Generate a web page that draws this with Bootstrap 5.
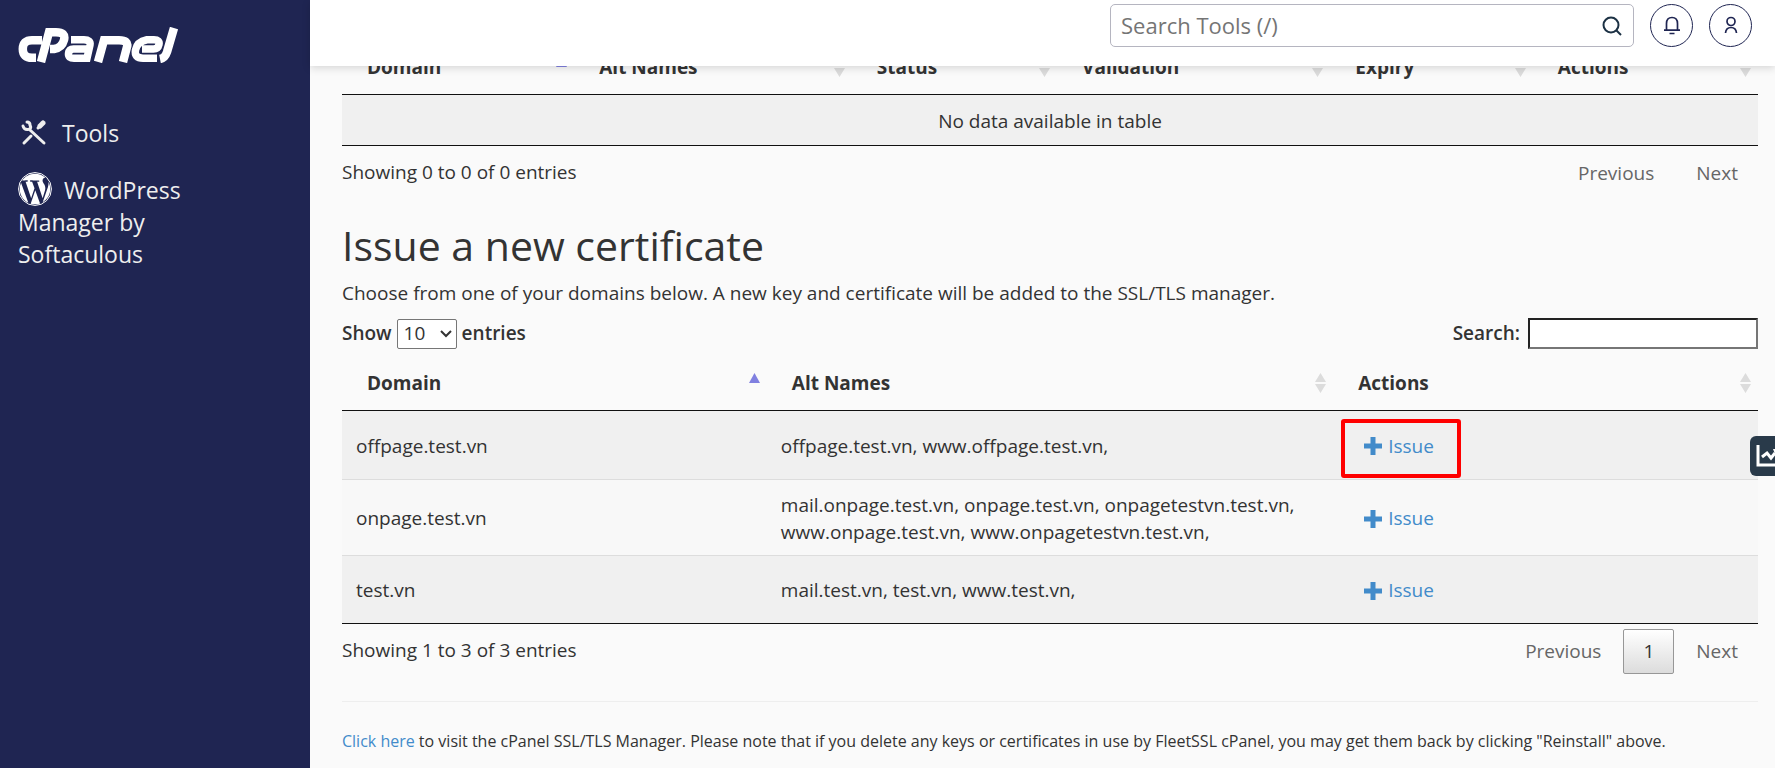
<!DOCTYPE html>
<html lang="en">
<head>
<meta charset="utf-8">
<meta name="viewport" content="width=device-width, initial-scale=1">
<title>cPanel - SSL certificates</title>
<link href="https://cdn.jsdelivr.net/npm/bootstrap@5.3.0/dist/css/bootstrap.min.css" rel="stylesheet">
<style>
  body { font-family: "Open Sans", "Noto Sans", sans-serif; font-size: 19px; line-height: 27px; color: #333; background: #fafafa; }
  a { color: #428bca; text-decoration: none; }

  .side-panel { width: 310px; background: #1f2552; padding: 27px 18px; }
  .side-panel a { color: #eee; font-size: 23px; line-height: 32px; }
  .brand-link { margin-bottom: 54px; }
  .wp-link { max-width: 190px; margin-top: 25px; }
  .wp-link svg { margin: -8px 12px 0 0; }

  .top-bar { height: 66px; background: #fff; padding: 4px 23px 0 0; gap: 16px; box-shadow: 0 2px 8px rgba(0,0,0,.15); z-index: 2; }
  .tool-search { width: 524px; height: 43px; border: 1px solid #b5b5c0; border-radius: 5px; background: #fff; }
  .tool-search input { border: 0; outline: 0; font-size: 22px; padding: 0 10px; min-width: 0; }
  .tool-search input::placeholder { color: #757575; opacity: 1; }
  .tool-search button { border: 0; background: none; padding: 0 11px; }
  .round-btn { width: 43px; height: 43px; border: 1px solid #1f2552; border-radius: 50%; background: #fff; padding: 0; }

  .page-body { margin-top: -26px; padding: 0 17px 0 32px; }
  .data-grid { width: 100%; table-layout: fixed; border-collapse: separate; border-spacing: 0; border-bottom: 1px solid #111; }
  .data-grid th { position: relative; height: 55px; padding: 0 25px; border-bottom: 1px solid #111; font-weight: 700; }
  .data-grid td { height: 68px; padding: 9px 14px 7px; background: #f0f0f0; }
  .data-grid tbody tr + tr td { border-top: 1px solid #ddd; }
  .data-grid tbody tr:nth-child(even) td { background: #f8f8f8; height: 76px; }
  .data-grid td.empty-cell { height: 50px; }
  .sorter { position: absolute; right: 7px; top: 17px; }
  .w-a { width: 16.4%; } .w-b { width: 19.6%; } .w-c { width: 14.5%; } .w-d { width: 19.3%; } .w-e { width: 14.3%; }
  .w-30 { width: 30%; } .w-40 { width: 40%; }

  .pager { padding-top: 5px; gap: 2px; }
  .pager button { height: 45px; padding: 0 19px; border: 1px solid transparent; border-radius: 2px; background: none; color: #666; }
  .pager button.current { border-color: #979797; color: #333; background: linear-gradient(#fff, #dcdcdc); }
  .entries-info { padding-top: 13px; }

  h2 { font-size: 41px; line-height: 44px; font-weight: 400; margin: 27px 0 13px; }
  .grid-tools { margin-top: 11px; padding-bottom: 7px; font-weight: 600; }
  .length-group { gap: 5px; }
  .length-select { width: 60px; height: 30px; border: 1px solid #767676; border-radius: 2px; color: #333; padding: 0 6px; appearance: none;
    background: #fff url("data:image/svg+xml,%3Csvg xmlns='http://www.w3.org/2000/svg' viewBox='0 0 12 8' fill='none' stroke='%23333' stroke-width='2'%3E%3Cpath d='M1 1l5 5 5-5'/%3E%3C/svg%3E") no-repeat right 4px center / 12px 8px; }
  .filter-input { width: 230px; height: 31px; border: 2px solid; border-color: #222 #767676 #767676 #222; background: #fff; }
  .issue-link { width: fit-content; padding: 0 17px; gap: 6px; }
  .marked { position: relative; }
  .marked::after { content: ""; position: absolute; inset: -14px -10px -18px -6px; border: 4px solid #f00; border-radius: 3px; }
  hr { margin: 27px 0 26px; border-top: 1px solid #eee; opacity: 1; }
  .foot-note { font-size: 16px; }
  .stats-tab { position: fixed; right: 0; top: 436px; width: 25px; height: 40px; border: 0; border-radius: 6px 0 0 6px; background: #293a4a; padding: 0; z-index: 3; }
</style>
</head>
<body>
<svg class="d-none">
  <symbol id="sort-both" viewBox="0 0 11 20"><path d="M5.500 0L11 9H0zM0 11H11L5.500 20z" fill="#dcdcdc"/></symbol>
  <symbol id="sort-asc" viewBox="0 0 11 20"><path d="M5.500 0L11 10H0z" fill="#8080e0"/></symbol>
  <symbol id="plus" viewBox="0 0 18 18"><path d="M6.500 0h5v6.500H18v5h-6.500V18h-5v-6.500H0v-5h6.500z" fill="#428bca"/></symbol>
</svg>
<div class="d-flex min-vh-100">
  <nav class="side-panel flex-shrink-0 d-flex flex-column" aria-label="Main">
    <a class="brand-link d-block" href="#" aria-label="cPanel">
      <svg class="d-block" width="160" height="36" viewBox="0 0 160 36" fill="none" stroke="#fff" stroke-width="8.500">
        <path d="M24 13.200H14Q4.800 13.200 4.800 22T14 30.800H18M23 35L31 5.200H38Q48 5.200 46 13T36 22H32M80 35L86 13.200H101Q111 13.200 109 20L105 35M156 1L149 25Q147 31 142 32"/>
        <path stroke-width="7.500" d="M53 12.800H66Q73 12.800 72 18L69 31.200H56Q50 31.200 50.500 26.500T56 22H68M139 31.200H125Q116 31.200 117.500 23T129 12.800H136Q142 12.800 141 17.500T135 22H124"/>
      </svg>
    </a>
    <a class="d-flex align-items-center" href="#">
      <svg width="32" height="26" viewBox="0 0 32 26" fill="none" stroke="#eee" stroke-linecap="round">
        <path stroke-width="3" d="M12 10L26 23M6 23L13 16M20 8L22 6"/>
        <path stroke-width="5" d="M22 6L25 3"/>
        <path stroke-width="3" d="M5 6Q6 10 10 9.500T12 5Q12 2 9 2" />
      </svg>
      <span class="ms-2 ps-1">Tools</span>
    </a>
    <a class="wp-link" href="#"><svg width="34" height="34" viewBox="0 0 24 24" fill="#fff"><circle cx="12" cy="12" r="11.600" fill="none" stroke="#fff" stroke-width=".7"/><path d="M21.469 6.825c.84 1.537 1.318 3.300 1.318 5.175 0 3.979-2.156 7.456-5.363 9.325l3.295-9.527c.615-1.540.82-2.771.82-3.864 0-.405-.026-.78-.07-1.110m-7.981.105c.647-.03 1.232-.105 1.232-.105.582-.075.514-.93-.067-.899 0 0-1.755.135-2.880.135-1.064 0-2.850-.15-2.850-.15-.585-.03-.661.855-.075.885 0 0 .54.061 1.125.09l1.680 4.605-2.370 7.080L5.354 6.900c.649-.03 1.234-.1 1.234-.1.585-.075.516-.93-.065-.896 0 0-1.746.138-2.874.138-.2 0-.438-.008-.69-.015C4.911 3.150 8.235 1.215 12 1.215c2.809 0 5.365 1.072 7.286 2.833-.046-.003-.091-.009-.141-.009-1.060 0-1.812.923-1.812 1.914 0 .89.513 1.643 1.060 2.531.411.72.89 1.643.89 2.977 0 .915-.354 1.994-.821 3.479l-1.075 3.585-3.900-11.610zM12 22.784c-1.059 0-2.081-.153-3.048-.437l3.237-9.406 3.315 9.087c.024.053.05.101.078.149-1.120.393-2.325.609-3.582.609M1.211 12c0-1.564.336-3.050.935-4.390L7.290 21.709C3.694 19.960 1.212 16.271 1.211 12"/></svg>WordPress Manager by Softaculous</a>
  </nav>

  <div class="flex-grow-1 d-flex flex-column">
    <header class="top-bar d-flex justify-content-end sticky-top flex-shrink-0">
      <form class="tool-search d-flex align-items-center">
        <input class="flex-grow-1" type="search" aria-label="Search tools" placeholder="Search Tools (/)">
        <button type="button" aria-label="Search"><svg class="d-block" width="20" height="20" viewBox="0 0 20 20" fill="none" stroke="#1c3144" stroke-width="2"><circle cx="9" cy="9" r="7.500"/><path d="M14 14L19 19"/></svg></button>
      </form>
      <button class="round-btn d-flex align-items-center justify-content-center" type="button" aria-label="Notifications">
        <svg width="18" height="20" viewBox="0 0 18 20" fill="none" stroke="#1f2552" stroke-width="1.700"><path d="M3.500 14V7.500Q3.500 1.500 9 1.500T14.500 7.500V14M1 14.200H17M6.500 17.500H11.500"/></svg>
      </button>
      <button class="round-btn d-flex align-items-center justify-content-center" type="button" aria-label="Account">
        <svg width="18" height="20" viewBox="0 0 18 20" fill="none" stroke="#1f2552" stroke-width="1.700"><circle cx="9" cy="5.500" r="4"/><path d="M3.500 17Q4 11.500 9 11.500T14.500 17"/></svg>
      </button>
    </header>

    <main class="page-body">
      <table class="data-grid">
        <thead>
          <tr>
            <th class="w-a" scope="col">Domain<svg class="sorter" width="11" height="20"><use href="#sort-asc"/></svg></th>
            <th class="w-b" scope="col">Alt Names<svg class="sorter" width="11" height="20"><use href="#sort-both"/></svg></th>
            <th class="w-c" scope="col">Status<svg class="sorter" width="11" height="20"><use href="#sort-both"/></svg></th>
            <th class="w-d" scope="col">Validation<svg class="sorter" width="11" height="20"><use href="#sort-both"/></svg></th>
            <th class="w-e" scope="col">Expiry<svg class="sorter" width="11" height="20"><use href="#sort-both"/></svg></th>
            <th scope="col">Actions<svg class="sorter" width="11" height="20"><use href="#sort-both"/></svg></th>
          </tr>
        </thead>
        <tbody>
          <tr><td class="empty-cell text-center" colspan="6">No data available in table</td></tr>
        </tbody>
      </table>
      <div class="d-flex justify-content-between align-items-start">
        <div class="entries-info">Showing 0 to 0 of 0 entries</div>
        <div class="pager d-flex">
          <button type="button">Previous</button>
          <button type="button">Next</button>
        </div>
      </div>

      <h2>Issue a new certificate</h2>
      <p class="mb-0">Choose from one of your domains below. A new key and certificate will be added to the SSL/TLS manager.</p>

      <div class="grid-tools d-flex justify-content-between">
        <label class="length-group d-flex align-items-center">Show
          <select class="length-select"><option>10</option><option>25</option><option>50</option><option>100</option></select>
          entries</label>
        <label class="d-flex align-items-center gap-2">Search: <input class="filter-input" type="search"></label>
      </div>

      <table class="data-grid">
        <thead>
          <tr>
            <th class="w-30" scope="col">Domain<svg class="sorter" width="11" height="20"><use href="#sort-asc"/></svg></th>
            <th class="w-40" scope="col">Alt Names<svg class="sorter" width="11" height="20"><use href="#sort-both"/></svg></th>
            <th scope="col">Actions<svg class="sorter" width="11" height="20"><use href="#sort-both"/></svg></th>
          </tr>
        </thead>
        <tbody>
          <tr>
            <td>offpage.test.vn</td>
            <td>offpage.test.vn, www.offpage.test.vn,</td>
            <td><a class="issue-link marked d-flex align-items-center" href="#"><svg width="18" height="18"><use href="#plus"/></svg>Issue</a></td>
          </tr>
          <tr>
            <td>onpage.test.vn</td>
            <td>mail.onpage.test.vn, onpage.test.vn, onpagetestvn.test.vn, www.onpage.test.vn, www.onpagetestvn.test.vn,</td>
            <td><a class="issue-link d-flex align-items-center" href="#"><svg width="18" height="18"><use href="#plus"/></svg>Issue</a></td>
          </tr>
          <tr>
            <td>test.vn</td>
            <td>mail.test.vn, test.vn, www.test.vn,</td>
            <td><a class="issue-link d-flex align-items-center" href="#"><svg width="18" height="18"><use href="#plus"/></svg>Issue</a></td>
          </tr>
        </tbody>
      </table>
      <div class="d-flex justify-content-between align-items-start">
        <div class="entries-info">Showing 1 to 3 of 3 entries</div>
        <div class="pager d-flex">
          <button type="button">Previous</button>
          <button class="current" type="button">1</button>
          <button type="button">Next</button>
        </div>
      </div>
      <hr>
      <p class="foot-note mb-0"><a href="#">Click here</a> to visit the cPanel SSL/TLS Manager. Please note that if you delete any keys or certificates in use by FleetSSL cPanel, you may get them back by clicking "Reinstall" above.</p>
    </main>
  </div>
</div>
<button class="stats-tab" type="button" aria-label="Statistics">
  <svg class="d-block" width="25" height="40" viewBox="0 0 25 40" fill="none" stroke="#fff" stroke-width="3"><path d="M8 9V29H25M12 21L17 17L21 22L25 17"/><path fill="#fff" stroke="none" d="M23 13h2v5z"/></svg>
</button>
<script src="https://cdn.jsdelivr.net/npm/bootstrap@5.3.0/dist/js/bootstrap.bundle.min.js"></script>
</body>
</html>
